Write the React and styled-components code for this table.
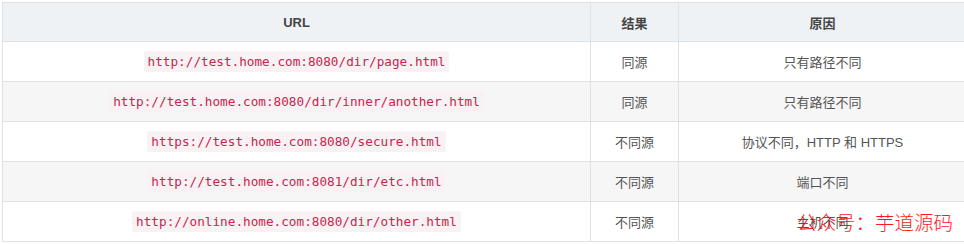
import React from "react";
import styled, { createGlobalStyle } from "styled-components";

const GlobalStyle = createGlobalStyle`
  body {
    margin: 0;
    background: #fff;
    font-family: "Liberation Sans", "Noto Sans CJK SC", sans-serif;
  }
`;

const Page = styled.div`
  position: relative;
  padding: 2px 0 0 2px;
  width: 961px;
`;

const Table = styled.table`
  border-collapse: collapse;
  width: 961px;
  table-layout: fixed;
  font-size: 13px;
  color: #555;
`;

const Th = styled.th`
  height: 38px;
  padding: 0;
  border: 1px solid #dfe2e5;
  background: #eff2f5;
  color: #444;
  font-weight: bold;
  text-align: center;
  width: ${(p) => p.w}px;
`;

const Row = styled.tr`
  background: ${(p) => (p.striped ? "#f6f6f6" : "#fff")};
`;

const Td = styled.td`
  height: 39px;
  padding: 0;
  border: 1px solid #dfe2e5;
  text-align: center;
  vertical-align: middle;
`;

const Code = styled.code`
  font-family: "DejaVu Sans Mono", "Liberation Mono", monospace;
  font-size: 12.7px;
  color: #c7254e;
  background: #f9f2f4;
  padding: 3px 4px;
  border-radius: 2px;
`;

const Watermark = styled.div`
  position: absolute;
  right: 10px;
  bottom: 6px;
  font-family: "Noto Sans CJK SC", sans-serif;
  font-size: 19.5px;
  color: #ff0000;
  font-weight: 300;
  opacity: 0.9;
`;

const rows = [
  ["http://test.home.com:8080/dir/page.html", "同源", "只有路径不同"],
  ["http://test.home.com:8080/dir/inner/another.html", "同源", "只有路径不同"],
  ["https://test.home.com:8080/secure.html", "不同源", "协议不同，HTTP 和 HTTPS"],
  ["http://test.home.com:8081/dir/etc.html", "不同源", "端口不同"],
  ["http://online.home.com:8080/dir/other.html", "不同源", "主机不同"],
];

export default function App() {
  return (
    <Page>
      <GlobalStyle />
      <Table>
        <thead>
          <tr>
            <Th w={587}>URL</Th>
            <Th w={87}>结果</Th>
            <Th w={287}>原因</Th>
          </tr>
        </thead>
        <tbody>
          {rows.map(([url, result, reason], i) => (
            <Row key={url} striped={i % 2 === 1}>
              <Td>
                <Code>{url}</Code>
              </Td>
              <Td>{result}</Td>
              <Td>{reason}</Td>
            </Row>
          ))}
        </tbody>
      </Table>
      <Watermark>公众号：芋道源码</Watermark>
    </Page>
  );
}
